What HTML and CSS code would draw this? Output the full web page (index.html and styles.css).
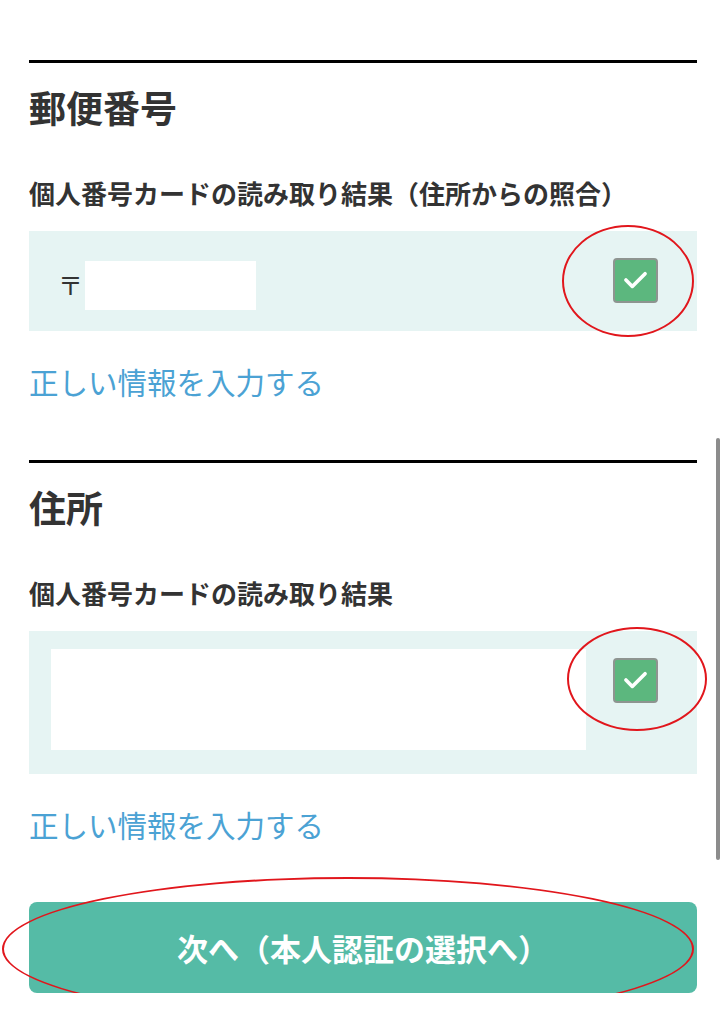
FILE: index.html
```html
<!DOCTYPE html>
<html lang="ja">
<head>
    <meta charset="UTF-8">
    <meta name="viewport" content="width=device-width, initial-scale=1.0">
    <title>本人確認</title>
    <link rel="stylesheet" href="styles.css">
</head>
<body>
    <main class="page">
        <section class="field">
            <h2 class="field-title">郵便番号</h2>
            <p class="field-label">個人番号カードの読み取り結果（住所からの照合）</p>
            <div class="result result-postal">
                <span class="postal-mark">〒</span>
                <span class="masked masked-postal"></span>
                <span class="check">
                    <svg viewBox="0 0 45 45" width="41" height="41"><polyline points="12,22 19,29 33,15" fill="none" stroke="#fff" stroke-width="4" stroke-linecap="round" stroke-linejoin="round"/></svg>
                </span>
                <span class="mark mark-postal"></span>
            </div>
            <a class="fix-link" href="#">正しい情報を入力する</a>
        </section>

        <section class="field">
            <h2 class="field-title">住所</h2>
            <p class="field-label">個人番号カードの読み取り結果</p>
            <div class="result result-address">
                <span class="masked masked-address"></span>
                <span class="check check-address">
                    <svg viewBox="0 0 45 45" width="41" height="41"><polyline points="12,22 19,29 33,15" fill="none" stroke="#fff" stroke-width="4" stroke-linecap="round" stroke-linejoin="round"/></svg>
                </span>
                <span class="mark mark-address"></span>
            </div>
            <a class="fix-link" href="#">正しい情報を入力する</a>
        </section>

        <div class="actions">
            <button class="next-btn" type="button">次へ（本人認証の選択へ）</button>
            <span class="mark mark-button"></span>
        </div>
    </main>
    <div class="scrollbar"></div>
</body>
</html>
```

FILE: styles.css
```css
body {
    margin: 0;
    background: #fff;
    font-family: "Noto Sans CJK JP", "Noto Sans", sans-serif;
    color: #333;
}
.page {
    padding: 60px 28px 0 29px;
}
.field {
    border-top: 3px solid #000;
    margin-bottom: 57px;
}
.field-title {
    margin: 17px 0 0;
    font-size: 37px;
    line-height: 54px;
    font-weight: 700;
}
.field-label {
    margin: 40px 0 20px;
    font-size: 26px;
    line-height: 37px;
    font-weight: 700;
}
.result {
    position: relative;
    display: flex;
    align-items: flex-start;
    background: #e6f4f3;
}
.result-postal {
    height: 100px;
    box-sizing: border-box;
    padding: 27px 39px 0 29px;
}
.result-address {
    padding: 18px 39px 24px 22px;
}
.postal-mark {
    margin-top: 9px;
    margin-right: 2px;
    font-size: 25px;
    line-height: 34px;
}
.masked {
    background: #fff;
}
.masked-postal {
    width: 171px;
    height: 49px;
    margin-top: 3px;
}
.masked-address {
    width: 535px;
    height: 101px;
}
.check {
    margin-left: auto;
    width: 45px;
    height: 45px;
    box-sizing: border-box;
    border: 2px solid #8e9490;
    border-radius: 4px;
    background: #5cb77e;
    display: flex;
    align-items: center;
    justify-content: center;
}
.check-address {
    margin-top: 9px;
}
.fix-link {
    display: block;
    margin-top: 29px;
    font-size: 29.5px;
    line-height: 43px;
    color: #4ba2d4;
    text-decoration: none;
}
.actions {
    position: relative;
    margin-top: -1px;
}
.next-btn {
    display: block;
    width: 100%;
    height: 91px;
    border: none;
    border-radius: 8px;
    background: #55bba6;
    color: #fff;
    font-family: inherit;
    font-size: 31px;
    font-weight: 700;
    cursor: pointer;
}
/* red annotation rings */
.mark {
    position: absolute;
    border: 2.5px solid #e1161c;
    border-radius: 50%;
    box-sizing: border-box;
    pointer-events: none;
}
.mark-postal {
    left: 533px;
    top: -6px;
    width: 132px;
    height: 112px;
}
.mark-address {
    left: 538px;
    top: -4px;
    width: 140px;
    height: 104px;
}
.mark-button {
    left: -27px;
    top: -25px;
    width: 692px;
    height: 144px;
}
.scrollbar {
    position: fixed;
    left: 716px;
    top: 438px;
    width: 4px;
    height: 422px;
    border-radius: 2px;
    background: #8c8c8c;
}
```
